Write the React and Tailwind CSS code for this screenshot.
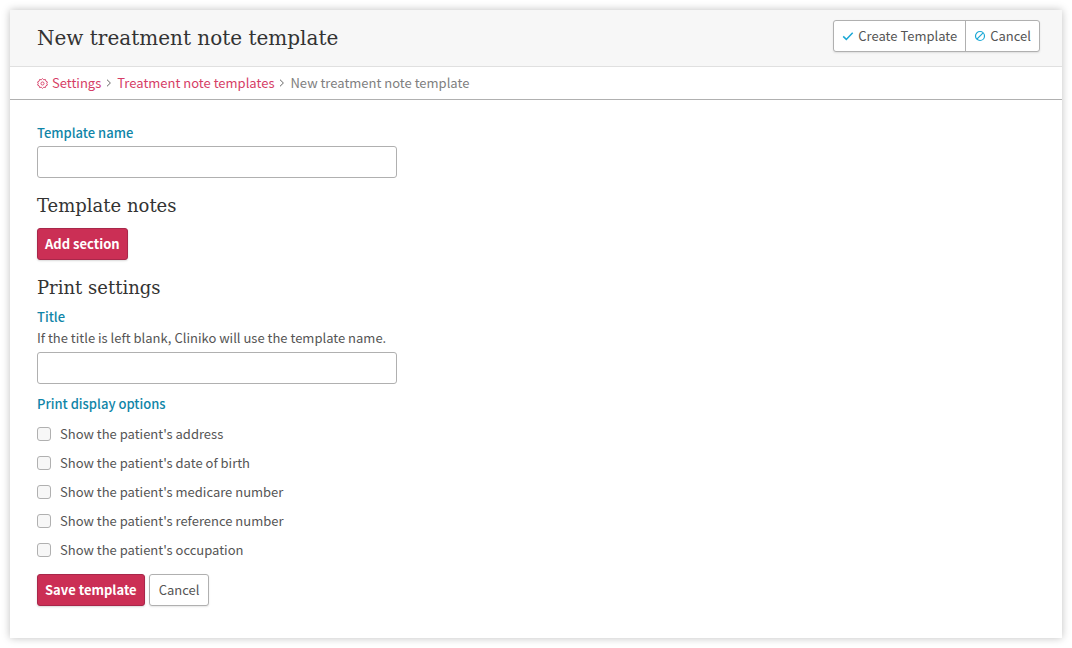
import { useState } from 'react'

const OPTIONS = [
  { id: 'address', label: "Show the patient's address" },
  { id: 'dob', label: "Show the patient's date of birth" },
  { id: 'medicare', label: "Show the patient's medicare number" },
  { id: 'reference', label: "Show the patient's reference number" },
  { id: 'occupation', label: "Show the patient's occupation" },
]

const inputClass =
  'block w-full max-w-[360px] h-8 px-2 bg-white border border-[#b0b0b0] rounded-[3px] outline-none focus:border-[#0f85a8]'
const primaryClass =
  'h-8 px-[7px] rounded-[3px] border border-[#a8274a] bg-[#cb2f55] font-bold text-white shadow-[0_1px_2px_rgba(0,0,0,0.15)] cursor-pointer'
const labelClass = 'block w-fit leading-[21px] font-medium text-[#0f85a8]'

function GearIcon() {
  return (
    <svg viewBox="0 0 24 24" className="w-[11px] h-[11px]" fill="none" stroke="currentColor" strokeWidth="2" aria-hidden="true">
      <path
        strokeLinejoin="round"
        d="M12 1.2 14.7 3.9 18.4 3.2 19.3 6.9 22.8 8.6 21.3 12 22.8 15.4 19.3 17.1 18.4 20.8 14.7 20.1 12 22.8 9.3 20.1 5.6 20.8 4.7 17.1 1.2 15.4 2.7 12 1.2 8.6 4.7 6.9 5.6 3.2 9.3 3.9Z"
      />
      <circle cx="12" cy="12" r="3.4" />
    </svg>
  )
}

function CheckIcon() {
  return (
    <svg viewBox="0 0 12 12" className="w-3 h-3 text-[#1ba8d5]" fill="none" stroke="currentColor" strokeWidth="1.5" aria-hidden="true">
      <path d="M1.2 6.4 4.3 9.4 10.7 2.8" />
    </svg>
  )
}

function BanIcon() {
  return (
    <svg viewBox="0 0 12 12" className="w-3 h-3 text-[#1ba8d5]" fill="none" stroke="currentColor" strokeWidth="1.2" aria-hidden="true">
      <circle cx="6" cy="6" r="4.5" />
      <path d="M2.9 9.1 9.1 2.9" />
    </svg>
  )
}

function Chevron() {
  return (
    <svg viewBox="0 0 6 8" className="w-[6px] h-2 text-[#666]" fill="none" stroke="currentColor" aria-hidden="true">
      <path d="M1 0.7 4.4 4 1 7.3" />
    </svg>
  )
}

function SectionTitle({ children }) {
  return (
    <h2 className="pt-3 pb-[6px] font-['DejaVu_Serif',serif] text-[18px] leading-8 text-[#333]">
      {children}
    </h2>
  )
}

export default function App() {
  const [checked, setChecked] = useState({})
  const toggle = (id) => setChecked((prev) => ({ ...prev, [id]: !prev[id] }))

  return (
    <div className="bg-white p-[10px] font-['Noto_Sans_CJK_SC',sans-serif] text-[13px] text-[#555]">
      <main className="bg-white shadow-[0_0_8px_rgba(0,0,0,0.25)]">
        <header className="flex items-start justify-between bg-[#f7f7f7] border-b border-[#e0e0e0] pl-[27px] pr-[22px] py-[10px]">
          <h1 className="font-['DejaVu_Serif',serif] text-[20px] leading-9 text-[#333]">
            New treatment note template
          </h1>
          <div className="flex h-8 bg-white border border-[#b0b0b0] rounded-[3px] shadow-[0_1px_2px_rgba(0,0,0,0.1)]">
            <button type="submit" form="template-form" className="flex items-center gap-1 px-2 cursor-pointer">
              <CheckIcon />
              Create Template
            </button>
            <button type="button" className="flex items-center gap-1 px-2 border-l border-[#b0b0b0] cursor-pointer">
              <BanIcon />
              Cancel
            </button>
          </div>
        </header>

        <nav aria-label="Breadcrumb" className="flex items-center gap-[5px] h-[33px] px-[27px] border-b border-[#b0b0b0]">
          <a href="#settings" className="flex items-center gap-1 text-[#d63d66]">
            <GearIcon />
            Settings
          </a>
          <Chevron />
          <a href="#templates" className="text-[#d63d66]">Treatment note templates</a>
          <Chevron />
          <span className="text-[#808080]">New treatment note template</span>
        </nav>

        <form id="template-form" onSubmit={(e) => e.preventDefault()} className="px-[27px] pt-[22px] pb-8">
          <label htmlFor="template-name" className={labelClass}>Template name</label>
          <input id="template-name" type="text" className={`${inputClass} mt-[3px]`} />

          <SectionTitle>Template notes</SectionTitle>
          <button type="button" className={primaryClass}>Add section</button>

          <SectionTitle>Print settings</SectionTitle>
          <label htmlFor="print-title" className={`${labelClass} -mt-1`}>Title</label>
          <p id="title-help" className="leading-[21px]">
            If the title is left blank, Cliniko will use the template name.
          </p>
          <input id="print-title" type="text" aria-describedby="title-help" className={`${inputClass} mt-1`} />

          <fieldset className="mt-[9px]">
            <legend className={labelClass}>Print display options</legend>
            <div className="pt-[5px] pb-[10px]">
              {OPTIONS.map(({ id, label }) => (
                <label key={id} className="flex items-center gap-[9px] w-fit h-[29px]">
                  <input
                    type="checkbox"
                    checked={!!checked[id]}
                    onChange={() => toggle(id)}
                    className="appearance-none w-[14px] h-[14px] border border-[#b0b0b0] rounded-[3px] bg-[#f7f7f7] checked:bg-[#0f85a8]"
                  />
                  {label}
                </label>
              ))}
            </div>
          </fieldset>

          <div className="flex gap-1">
            <button type="submit" className={primaryClass}>Save template</button>
            <button
              type="button"
              className="h-8 px-[9px] bg-white border border-[#b0b0b0] rounded-[3px] shadow-[0_1px_2px_rgba(0,0,0,0.1)] cursor-pointer"
            >
              Cancel
            </button>
          </div>
        </form>
      </main>
    </div>
  )
}
